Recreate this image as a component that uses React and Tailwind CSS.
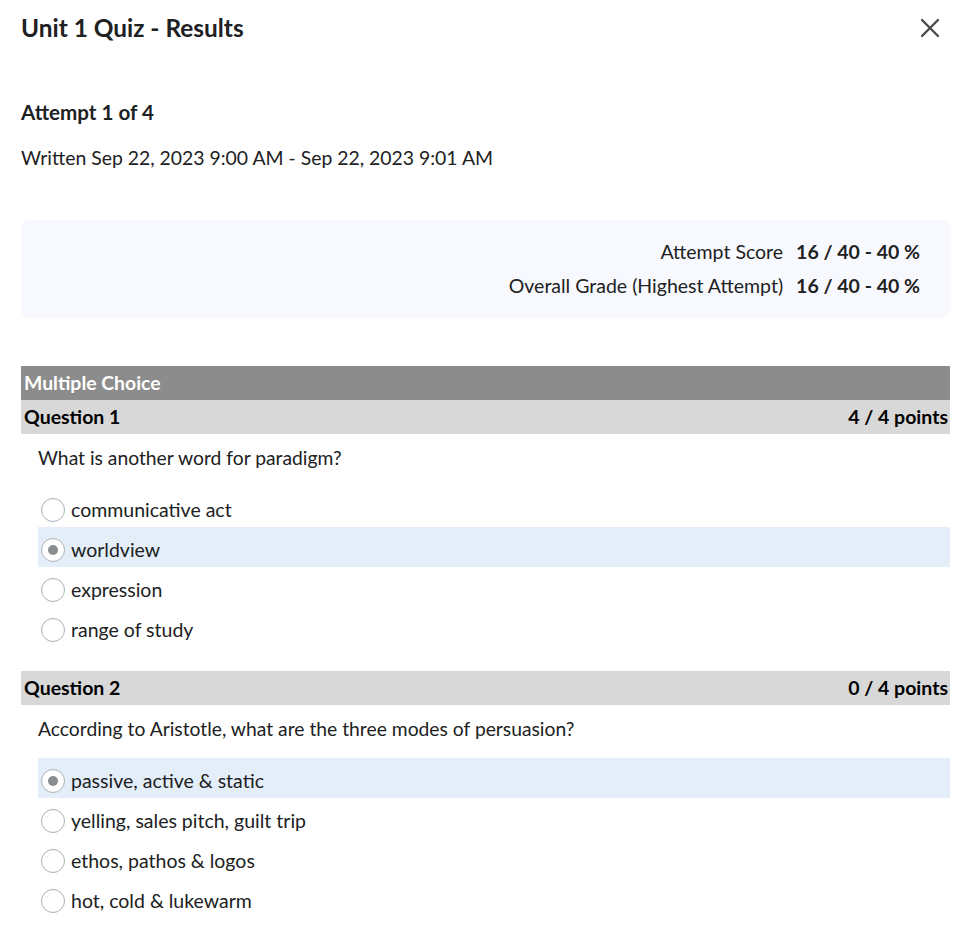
import React from "react";

const questions = [
  {
    title: "Question 1",
    points: "4 / 4 points",
    text: "What is another word for paradigm?",
    options: ["communicative act", "worldview", "expression", "range of study"],
    selected: 1,
  },
  {
    title: "Question 2",
    points: "0 / 4 points",
    text: "According to Aristotle, what are the three modes of persuasion?",
    options: [
      "passive, active & static",
      "yelling, sales pitch, guilt trip",
      "ethos, pathos & logos",
      "hot, cold & lukewarm",
    ],
    selected: 0,
  },
];

const Radio = ({ checked }) => (
  <span className="w-6 h-6 rounded-full border border-[#a9b0b6] bg-white flex items-center justify-center shrink-0">
    {checked && <span className="w-[10px] h-[10px] rounded-full bg-[#8a8d90]" />}
  </span>
);

const Question = ({ q }) => (
  <div>
    <div className="h-[34px] bg-[#d8d8d8] flex items-center justify-between pl-[3px] pr-[2px] text-[19.5px] font-bold text-black">
      <span>{q.title}</span>
      <span>{q.points}</span>
    </div>
    <div className="pl-[17px]">
      <p className="pt-3 pb-[17px] text-[19.3px] leading-6 text-[#202122]">{q.text}</p>
      <div>
        {q.options.map((opt, i) => (
          <div
            key={opt}
            className={`h-10 flex items-center gap-[6px] pl-[3px] pt-[5px] text-[19.5px] text-[#202122] ${
              i === q.selected ? "bg-[#e3eef9]" : ""
            }`}
          >
            <Radio checked={i === q.selected} />
            <span className="leading-6">{opt}</span>
          </div>
        ))}
      </div>
    </div>
  </div>
);

export default function App() {
  return (
    <div className="min-h-[925px] bg-white pl-[21px] pr-[19px] font-['Lato',sans-serif] text-[#202122]">
      <div className="h-[56px] flex items-center justify-between">
        <h1 className="text-[24.4px] font-bold">Unit 1 Quiz - Results</h1>
        <button className="mr-[10px] text-[#494c4e]">
          <svg width="20" height="20" viewBox="0 0 20 20" fill="none">
            <path d="M2 2L18 18M18 2L2 18" stroke="currentColor" strokeWidth="2.4" strokeLinecap="round" />
          </svg>
        </button>
      </div>

      <div className="mt-[42px] text-[20.6px] font-bold leading-7">Attempt 1 of 4</div>
      <div className="mt-[18px] text-[19.4px] leading-7">
        Written Sep 22, 2023 9:00 AM - Sep 22, 2023 9:01 AM
      </div>

      <div className="mt-[48px] h-[98px] rounded-lg bg-[#f8f9fe] flex flex-col justify-center items-end pr-[30px] text-[19.5px]">
        <div className="h-[34px] flex items-center gap-[13px]">
          <span>Attempt Score</span>
          <span className="font-bold">16 / 40 - 40 %</span>
        </div>
        <div className="h-[34px] flex items-center gap-[13px]">
          <span>Overall Grade (Highest Attempt)</span>
          <span className="font-bold">16 / 40 - 40 %</span>
        </div>
      </div>

      <div className="mt-[48px]">
        <div className="h-[34px] bg-[#8c8c8c] flex items-center pl-[3px] text-[19.4px] font-bold text-white">
          Multiple Choice
        </div>
        <Question q={questions[0]} />
        <div className="h-6" />
        <Question q={questions[1]} />
      </div>
    </div>
  );
}
